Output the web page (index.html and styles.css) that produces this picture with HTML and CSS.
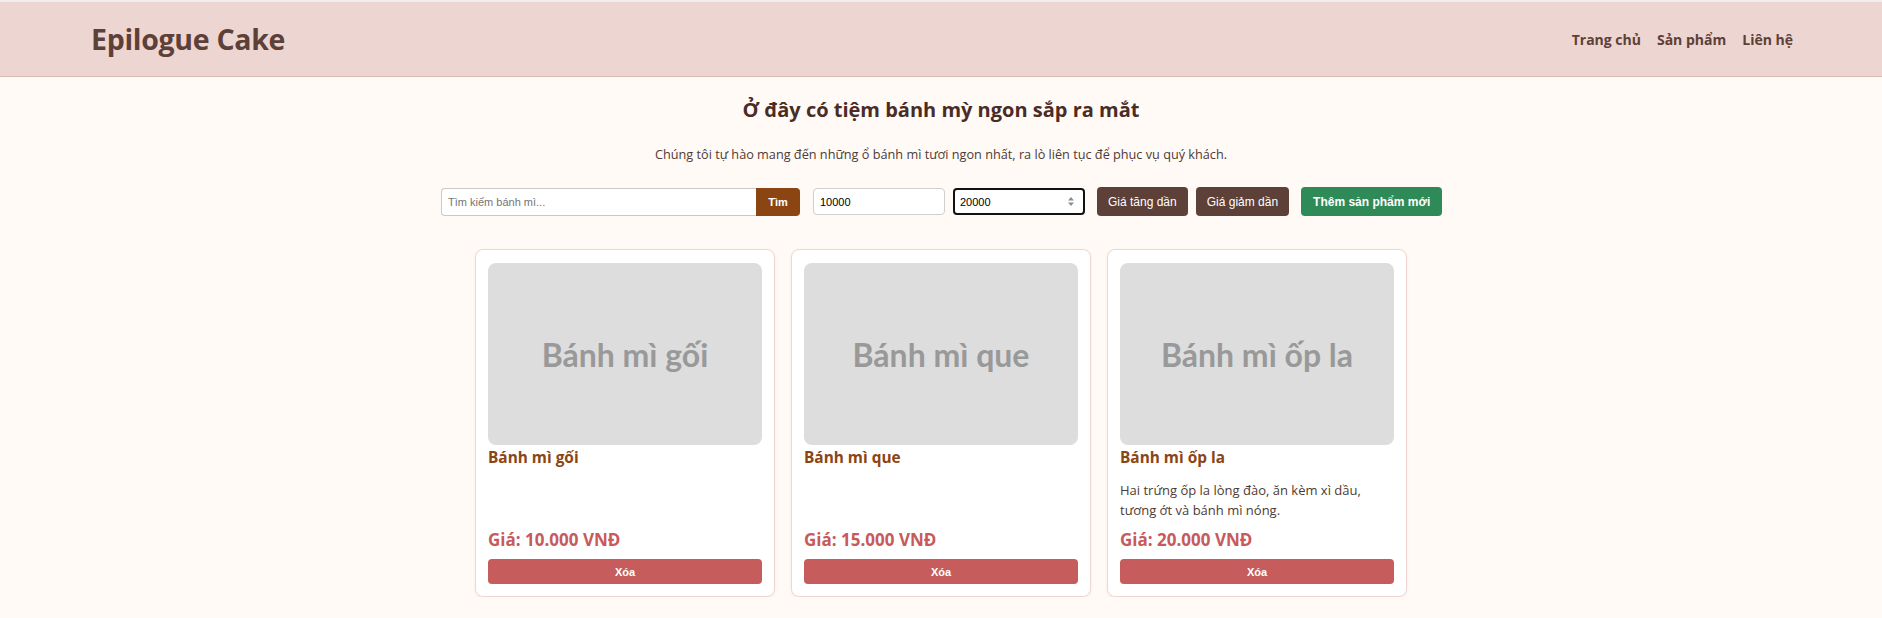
FILE: index.html
```html
<!DOCTYPE html>
<html lang="vi">
<head>
<meta charset="utf-8">
<title>Epilogue Cake</title>
<link rel="stylesheet" href="styles.css">
</head>
<body>
<header class="site-header">
  <div class="logo">Epilogue Cake</div>
  <nav class="nav">
    <a href="#">Trang chủ</a>
    <a href="#">Sản phẩm</a>
    <a href="#">Liên hệ</a>
  </nav>
</header>
<main class="main">
  <h2 class="title">Ở đây có tiệm bánh mỳ ngon sắp ra mắt</h2>
  <p class="subtitle">Chúng tôi tự hào mang đến những ổ bánh mì tươi ngon nhất, ra lò liên tục để phục vụ quý khách.</p>
  <div class="controls">
    <div class="search">
      <input class="search-input" type="text" placeholder="Tìm kiếm bánh mì...">
      <button class="search-btn">Tìm</button>
    </div>
    <input class="num-input gap-13" type="text" value="10000">
    <div class="num-field focused gap-8">
      <input class="num-inner" type="text" value="20000">
      <svg class="spinner" width="8" height="11" viewBox="0 0 8 11"><path d="M4 1 L7 4.5 H1 Z M4 10 L7 6.5 H1 Z" fill="#8d8d8d"/></svg>
    </div>
    <button class="btn btn-brown gap-12">Giá tăng dần</button>
    <button class="btn btn-brown gap-8">Giá giảm dần</button>
    <button class="btn btn-green gap-12">Thêm sản phẩm mới</button>
  </div>
  <div class="grid">
    <div class="card">
      <div class="thumb">Bánh mì gối</div>
      <h3 class="card-title">Bánh mì gối</h3>
      <p class="card-desc"></p>
      <div class="price">Giá: 10.000 VNĐ</div>
      <button class="del">Xóa</button>
    </div>
    <div class="card">
      <div class="thumb">Bánh mì que</div>
      <h3 class="card-title">Bánh mì que</h3>
      <p class="card-desc"></p>
      <div class="price">Giá: 15.000 VNĐ</div>
      <button class="del">Xóa</button>
    </div>
    <div class="card">
      <div class="thumb">Bánh mì ốp la</div>
      <h3 class="card-title">Bánh mì ốp la</h3>
      <p class="card-desc">Hai trứng ốp la lòng đào, ăn kèm xì dầu, tương ớt và bánh mì nóng.</p>
      <div class="price">Giá: 20.000 VNĐ</div>
      <button class="del">Xóa</button>
    </div>
  </div>
</main>
</body>
</html>
```
FILE: styles.css
```css
* { box-sizing: border-box; }
html, body { margin: 0; padding: 0; }
body {
  background: #fffaf5;
  font-family: "Open Sans", "Noto Sans", sans-serif;
  color: #4e342e;
  border-top: 2px solid #efeded;
}
.site-header {
  height: 75px;
  background: #edd5d1;
  border-bottom: 1px solid #dcbcb6;
  display: flex;
  align-items: center;
  justify-content: space-between;
  padding: 0 89px 0 91px;
}
.logo {
  font-size: 28.5px;
  font-weight: 700;
  color: #5d4037;
  letter-spacing: -0.3px;
}
.nav { display: flex; gap: 16px; }
.nav a {
  color: #5d4037;
  font-weight: 700;
  font-size: 14px;
  text-decoration: none;
}
.main { display: flex; flex-direction: column; align-items: center; }
.title {
  margin: 17px 0 0;
  font-size: 20px;
  font-weight: 700;
  color: #4a2c26;
  line-height: 32px;
}
.subtitle {
  margin: 18px 0 0;
  font-size: 12.7px;
  line-height: 20px;
  color: #4e3b35;
}
.controls {
  margin-top: 23px;
  width: 1000px;
  display: flex;
  align-items: center;
}
.controls > * { flex-shrink: 0; }
.search { display: flex; height: 28px; }
.search-input {
  width: 315px;
  height: 28px;
  border: 1px solid #c9c9c9;
  border-right: none;
  border-radius: 4px 0 0 4px;
  padding: 0 6px;
  font-family: "Liberation Sans", Arial, sans-serif;
  font-size: 11px;
  background: #fff;
  outline: none;
}
.search-input::placeholder { color: #757575; }
.search-btn {
  width: 44px;
  height: 28px;
  border: none;
  border-radius: 0 4px 4px 0;
  background: #8b4513;
  color: #fff;
  font-family: "Liberation Sans", Arial, sans-serif;
  font-weight: 700;
  font-size: 11px;
}
.num-input {
  width: 132px;
  height: 27px;
  border: 1px solid #cfcfcf;
  border-radius: 4px;
  padding: 0 6px;
  font-family: "Liberation Sans", Arial, sans-serif;
  font-size: 11px;
  color: #000;
  background: #fff;
  outline: none;
}
.num-field {
  width: 132px;
  height: 27px;
  border: 2px solid #111;
  border-radius: 4px;
  background: #fff;
  display: flex;
  align-items: center;
  padding: 0 8px 0 5px;
}
.num-inner {
  flex: 1;
  min-width: 0;
  border: none;
  outline: none;
  padding: 0;
  font-family: "Liberation Sans", Arial, sans-serif;
  font-size: 11px;
  color: #000;
  background: transparent;
}
.spinner { display: block; }
.gap-13 { margin-left: 13px; }
.gap-12 { margin-left: 12px; }
.gap-8 { margin-left: 8px; }
.btn {
  height: 29px;
  border: none;
  border-radius: 4px;
  padding: 0 11px;
  color: #fff;
  font-family: "Liberation Sans", Arial, sans-serif;
  font-size: 12px;
  white-space: nowrap;
}
.btn-brown { background: #5d4037; }
.btn-green { background: #2e8b57; font-weight: 700; padding: 0 12px; }
.grid {
  margin-top: 33px;
  display: grid;
  grid-template-columns: repeat(3, 300px);
  gap: 16px;
  justify-content: center;
}
.card {
  background: #fff;
  border: 1px solid #f0d6d2;
  border-radius: 8px;
  padding: 13px 12px 12px;
  display: flex;
  flex-direction: column;
  box-shadow: 0 1px 3px rgba(120, 80, 70, 0.08);
  height: 348px;
}
.thumb {
  height: 182px;
  background: #dddddd;
  border-radius: 8px;
  display: flex;
  align-items: center;
  justify-content: center;
  font-family: Lato, sans-serif;
  font-weight: 700;
  font-size: 32px;
  color: #999999;
}
.card-title {
  margin: 2px 0 0;
  font-size: 15.4px;
  line-height: 22px;
  font-weight: 700;
  color: #8b4513;
}
.card-desc {
  margin: 11px 0 0;
  flex: 1;
  font-size: 13px;
  line-height: 20px;
  color: #4e3b35;
}
.price {
  font-size: 17px;
  font-weight: 700;
  color: #c85a5a;
  line-height: 22px;
}
.del {
  margin-top: 8px;
  height: 25px;
  border: none;
  border-radius: 4px;
  background: #c75c5c;
  color: #fff;
  font-family: "Liberation Sans", Arial, sans-serif;
  font-weight: 700;
  font-size: 11px;
}
```
